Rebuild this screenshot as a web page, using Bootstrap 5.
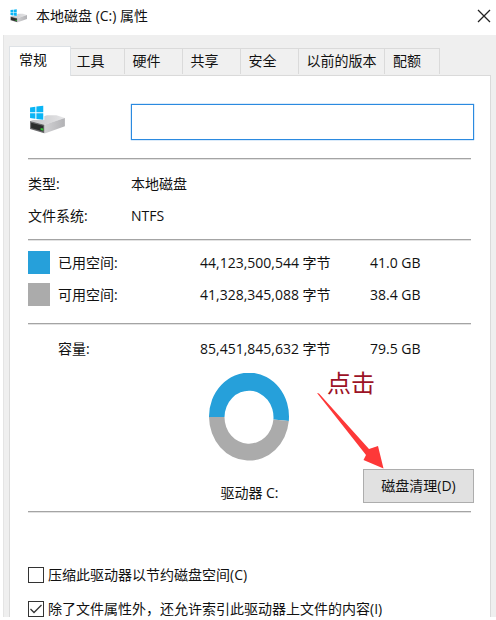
<!DOCTYPE html>
<html lang="zh-CN">
<head>
<meta charset="utf-8">
<meta name="viewport" content="width=device-width, initial-scale=1">
<title>本地磁盘 (C:) 属性</title>
<link href="https://cdn.jsdelivr.net/npm/bootstrap@5.3.0/dist/css/bootstrap.min.css" rel="stylesheet">
<style>
body { font-family: "Open Sans", "Noto Sans CJK SC", sans-serif; font-size: 14px; line-height: 20px; color: #111; background: #fff; }
.window { padding-bottom: 3px; }
.title-bar { height: 35px; padding: 0 5px 2px 10px; }
.title-bar svg { flex: none; }
.close-btn { width: 14px; height: 14px; }
.window-body { background: #efefef; border-left: 1px solid #e4e4e4; margin-left: 3px; padding: 11px 5px 0 5px; min-height: 0; }
.prop-tabs { border: 0; position: relative; z-index: 1; }
.prop-tabs .nav-link { border: 1px solid #dadada; border-left-width: 0; border-bottom: 0; border-radius: 0; margin: 2px 0 0; padding: 0; height: 26px; width: 58px; color: #111; background: #f0f0f0; }
.prop-tabs .nav-link.active { width: 62px; height: 30px; margin: 0 0 -1px; padding: 0 14px 2px 0; border-left-width: 1px; background: #fff; color: #111; }
.prop-tabs .tab-tools { width: 54px; padding-right: 14px; }
.prop-tabs .tab-narrow { padding-right: 14px; }
.prop-tabs .tab-wide { width: 86px; }
.prop-tabs .tab-last { width: 55px; padding-right: 10px; }
.panel { background: #fff; border: 1px solid #dadada; border-bottom: 0; padding: 28px 16px 0 18px; min-height: 0; }
.lead-col { width: 103px; flex: none; }
.volume-icon { margin: 1px; }
.name-box { height: 36px; border: 1px solid #2b8ae0; border-radius: 0; box-shadow: 0 0 1px #2b8ae0; }
.rule { border: 0; border-top: 1px solid #a4a4a4; opacity: 1; margin: 0 3px 0 0; box-shadow: 0 1px 0 #e2e2e2; }
.info-row { height: 32px; }
.usage { table-layout: fixed; width: 100%; }
.usage td, .usage th { height: 32px; padding: 0; font-weight: 400; }
.c-key { width: 30px; }
.c-label { width: 142px; }
.c-bytes { width: 170px; }
.swatch { display: block; width: 22px; height: 23px; }
.swatch-used { background: #26a0da; }
.swatch-free { background: #ababab; }
.gap-a { padding-top: 18px; }
.gap-b { padding: 9px 0 7px; }
.gap-c { padding: 7px 0 12px; }
.gap-d { padding-top: 9px; }
.chart-row { padding: 8px 3px 8px 0; }
.drive-label { margin-top: 22px; }
.clean-btn { width: 111px; height: 34px; padding: 0; margin-right: -3px; border: 1px solid #adadad; border-radius: 0; background: #e1e1e1; font-size: 14px; color: #111; }
.callout-note { position: absolute; right: 88px; bottom: 100%; width: 66px; height: 100px; pointer-events: none; }
.callout-text { position: absolute; left: 10px; top: 0; font-size: 24px; line-height: 28px; color: #9c1226; white-space: nowrap; }
.callout-note svg { position: absolute; left: 0; bottom: 0; }
.options { padding-top: 46px; }
.option { height: 34px; gap: 4px; }
.option .form-check-input { width: 16px; height: 16px; margin: 0; border: 1px solid #333; border-radius: 0; background-color: #fff; flex: none; }
.option .form-check-input:checked { background-color: #fff; border-color: #333; background-image: url("data:image/svg+xml,%3csvg xmlns='http://www.w3.org/2000/svg' viewBox='0 0 14 14'%3e%3cpath d='M1.5 7L5 10.5L12.5 3' fill='none' stroke='%23333' stroke-width='1.3'/%3e%3c/svg%3e"); }
</style>
<script src="https://cdn.jsdelivr.net/npm/bootstrap@5.3.0/dist/js/bootstrap.bundle.min.js"></script>
</head>
<body>
<svg width="0" height="0" class="position-absolute" aria-hidden="true">
  <defs>
    <linearGradient id="top-face" x1="0" y1="0" x2="1" y2="0"><stop offset="0" stop-color="#c4c4c6"/><stop offset="1" stop-color="#e6e6e8"/></linearGradient>
    <linearGradient id="side-face" x1="0" y1="0" x2="1" y2="0"><stop offset="0" stop-color="#d2d2d4"/><stop offset="1" stop-color="#b2b2b5"/></linearGradient>
    <symbol id="drive" viewBox="0 0 36 28">
      <path d="M1 15L17 9.500L26 9.500L34 12L15 18.500Z" fill="url(#top-face)"/>
      <path d="M14.500 18.500L34 12V20L15.500 26.500H14.500Z" fill="url(#side-face)"/>
      <path d="M1 15L14.500 18.500V26.500L1 22.500Z" fill="#6b6b6d"/>
      <path d="M2 16.500L13.500 19.500V25L2 21.500Z" fill="#2b2d2c"/>
      <path d="M11 21.500l2.500.6v2l-2.500-.6z" fill="#35c135"/>
      <path d="M0 .5H14.500V14H0Z" fill="#fff"/>
      <path d="M1 2.200L6 1.500V6.700H1ZM7 1.300L13.500 .4V6.700H7ZM1 7.700H6V12.900L1 12.200ZM7 7.700H13.500V13.800L7 13Z" fill="#09b5f5"/>
    </symbol>
  </defs>
</svg>
<div class="window vh-100 d-flex flex-column overflow-hidden">
  <header class="title-bar d-flex align-items-center gap-2">
    <svg width="18" height="14" aria-hidden="true"><use href="#drive"/></svg>
    <span>本地磁盘 (C:) 属性</span>
    <button type="button" class="close-btn btn p-0 border-0 ms-auto d-flex" aria-label="关闭">
      <svg width="14" height="14" viewBox="0 0 14 14" aria-hidden="true"><path d="M1 1L13 13M13 1L1 13" stroke="#222" stroke-width="1.300"/></svg>
    </button>
  </header>
  <main class="window-body flex-grow-1 d-flex flex-column overflow-hidden">
    <div class="prop-tabs nav nav-tabs flex-nowrap align-items-start flex-shrink-0" role="tablist">
      <button type="button" class="nav-link active" role="tab" aria-selected="true">常规</button>
      <button type="button" class="nav-link tab-tools" role="tab">工具</button>
      <button type="button" class="nav-link tab-narrow" role="tab">硬件</button>
      <button type="button" class="nav-link tab-narrow" role="tab">共享</button>
      <button type="button" class="nav-link tab-narrow" role="tab">安全</button>
      <button type="button" class="nav-link tab-wide" role="tab">以前的版本</button>
      <button type="button" class="nav-link tab-last" role="tab">配额</button>
    </div>
    <section class="panel flex-grow-1 overflow-hidden" role="tabpanel">
      <div class="d-flex">
        <div class="lead-col"><svg class="volume-icon" width="38" height="30" aria-hidden="true"><use href="#drive"/></svg></div>
        <input type="text" class="name-box form-control" aria-label="卷标">
      </div>
      <div class="gap-a"><hr class="rule"></div>
      <div class="gap-b">
        <div class="info-row d-flex align-items-center"><span class="lead-col">类型:</span><span>本地磁盘</span></div>
        <div class="info-row d-flex align-items-center"><span class="lead-col">文件系统:</span><span>NTFS</span></div>
      </div>
      <hr class="rule">
      <div class="gap-c">
        <table class="usage">
          <colgroup><col class="c-key"><col class="c-label"><col class="c-bytes"><col></colgroup>
          <tbody>
            <tr><td><span class="swatch swatch-used"></span></td><th scope="row">已用空间:</th><td>44,123,500,544 字节</td><td>41.0 GB</td></tr>
            <tr><td><span class="swatch swatch-free"></span></td><th scope="row">可用空间:</th><td>41,328,345,088 字节</td><td>38.4 GB</td></tr>
          </tbody>
        </table>
      </div>
      <hr class="rule">
      <div class="gap-d">
        <table class="usage">
          <colgroup><col class="c-key"><col class="c-label"><col class="c-bytes"><col></colgroup>
          <tbody>
            <tr><td></td><th scope="row">容量:</th><td>85,451,845,632 字节</td><td>79.5 GB</td></tr>
          </tbody>
        </table>
      </div>
      <div class="chart-row row g-0 align-items-end">
        <div class="col-4 offset-4 text-center">
          <svg width="82" height="88" viewBox="0 0 82 88" role="img" aria-label="已用 41.0 GB，可用 38.4 GB" class="d-block mx-auto">
            <path d="M1 44A40 44 0 1 1 80.800 48L65.400 46.600A24.500 26.500 0 1 0 16.500 44Z" fill="#26a0da"/>
            <path d="M1 44A40 44 0 0 0 80.800 48L65.400 46.600A24.500 26.500 0 0 1 16.500 44Z" fill="#ababab"/>
          </svg>
          <div class="drive-label">驱动器 C:</div>
        </div>
        <div class="col-4 d-flex justify-content-end position-relative">
          <button type="button" class="clean-btn btn">磁盘清理(D)</button>
          <div class="callout-note">
            <span class="callout-text">点击</span>
            <svg width="68" height="77" viewBox="0 0 68 77" aria-hidden="true"><path d="M0 1L2 1.500L52 57L61 54L66.500 76.500L46.500 68L49 63Z" fill="#fd3838"/></svg>
          </div>
        </div>
      </div>
      <hr class="rule">
      <div class="options">
        <div class="option d-flex align-items-center"><input class="form-check-input" type="checkbox" id="compress"><label for="compress">压缩此驱动器以节约磁盘空间(C)</label></div>
        <div class="option d-flex align-items-center"><input class="form-check-input" type="checkbox" id="index" checked><label for="index">除了文件属性外，还允许索引此驱动器上文件的内容(I)</label></div>
      </div>
    </section>
  </main>
</div>
</body>
</html>
